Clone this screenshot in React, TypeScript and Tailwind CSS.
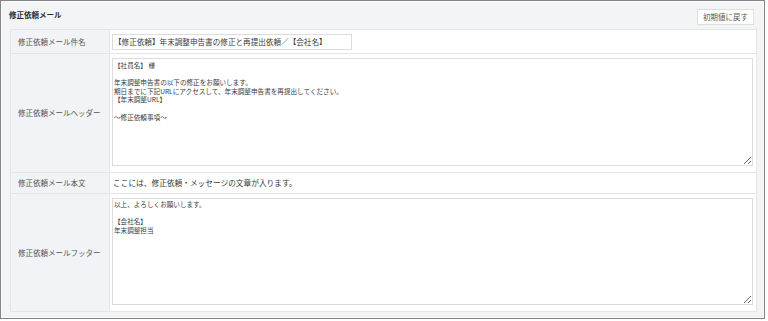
const font = { fontFamily: '"Noto Sans CJK JP", "Noto Sans", sans-serif' };

const headerText = `【社員名】 様

年末調整申告書の以下の修正をお願いします。
期日までに下記URLにアクセスして、年末調整申告書を再提出してください。
【年末調整URL】

〜修正依頼事項〜`;

const footerText = `以上、よろしくお願いします。

【会社名】
年末調整担当`;

const Label = ({ children }: { children: React.ReactNode }) => (
  <div className="flex items-center bg-[#f1f3f7] pl-[7px] text-[7.5px] text-[#555] border-r border-[#e6e8ec]">
    {children}
  </div>
);

export default function App() {
  return (
    <div className="w-[768px] h-[321px] bg-white" style={font}>
      <div className="w-[765px] h-[319px] border border-[#858585] bg-[#f3f4f6] shadow-[inset_0_0_0_1px_#fbfbfb] flex flex-col">
        {/* title bar */}
        <div className="flex items-center justify-between h-[28px] pl-[8px] pr-[10px] shrink-0">
          <h2 className="text-[7.5px] font-bold text-[#2e2e2e]">修正依頼メール</h2>
          <button className="h-[16px] px-[5px] mt-[3px] bg-white border border-[#dedede] text-[7.5px] text-[#555] leading-none">
            初期値に戻す
          </button>
        </div>

        {/* settings table */}
        <div className="ml-[9px] mr-[7px] border border-[#e3e5e9] bg-white grid grid-cols-[99px_1fr]">
          <Label>修正依頼メール件名</Label>
          <div className="h-[23px] flex items-center pl-[2px] pr-[3px]">
            <input
              defaultValue="【修正依頼】年末調整申告書の修正と再提出依頼／【会社名】"
              className="w-[240px] h-[16px] border border-[#dcdcdc] px-[1px] text-[7.6px] text-[#3a3a3a] outline-none"
            />
          </div>

          <div className="col-span-2 h-px bg-[#e3e5e9]" />

          <Label>修正依頼メールヘッダー</Label>
          <div className="pt-[4px] pb-[6px] pl-[2px] pr-[3px]">
            <textarea
              defaultValue={headerText}
              className="block w-full h-[108px] border border-[#dcdcdc] px-[1px] pt-[2px] text-[6.6px] leading-[8.6px] text-[#3a3a3a] outline-none"
            />
          </div>

          <div className="col-span-2 h-px bg-[#e3e5e9]" />

          <Label>修正依頼メール本文</Label>
          <div className="h-[20px] flex items-center pl-[3px] text-[7.7px] text-[#3a3a3a]">
            ここには、修正依頼・メッセージの文章が入ります。
          </div>

          <div className="col-span-2 h-px bg-[#e3e5e9]" />

          <Label>修正依頼メールフッター</Label>
          <div className="pt-[4px] pb-[6px] pl-[2px] pr-[3px]">
            <textarea
              defaultValue={footerText}
              className="block w-full h-[107px] border border-[#dcdcdc] px-[1px] pt-[1px] text-[6.6px] leading-[8.6px] text-[#3a3a3a] outline-none"
            />
          </div>
        </div>
      </div>
    </div>
  );
}
